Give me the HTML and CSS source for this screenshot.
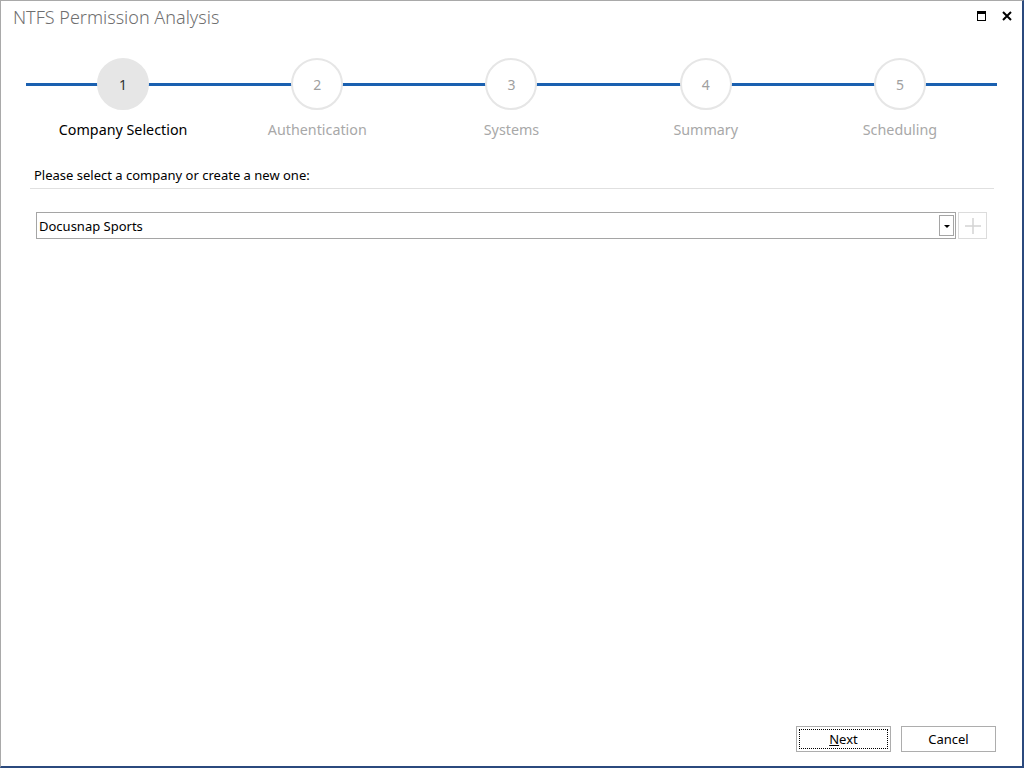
FILE: index.html
```html
<!DOCTYPE html>
<html lang="en">
<head>
    <meta charset="UTF-8">
    <title>NTFS Permission Analysis</title>
    <link rel="stylesheet" href="styles.css">
</head>
<body>
<div class="window">
    <div class="titlebar">
        <span class="title">NTFS Permission Analysis</span>
        <div class="controls">
            <span class="max-btn"></span>
            <svg class="close-btn" width="10" height="10" viewBox="0 0 10 10">
                <path d="M1 1 L9 9 M9 1 L1 9" stroke="#000" stroke-width="2"/>
            </svg>
        </div>
    </div>

    <div class="stepper">
        <div class="step-line"></div>
        <div class="step active">
            <div class="circle">1</div>
            <div class="label">Company Selection</div>
        </div>
        <div class="step">
            <div class="circle">2</div>
            <div class="label">Authentication</div>
        </div>
        <div class="step">
            <div class="circle">3</div>
            <div class="label">Systems</div>
        </div>
        <div class="step">
            <div class="circle">4</div>
            <div class="label">Summary</div>
        </div>
        <div class="step">
            <div class="circle">5</div>
            <div class="label">Scheduling</div>
        </div>
    </div>

    <div class="content">
        <p class="prompt">Please select a company or create a new one:</p>
        <div class="combo-row">
            <div class="combo">
                <span class="combo-text">Docusnap Sports</span>
                <span class="combo-arrow"></span>
            </div>
            <div class="add-btn">
                <svg width="18" height="18" viewBox="0 0 18 18">
                    <path d="M9 1 V17 M1 9 H17" stroke="#d4d4d4" stroke-width="1.5"/>
                </svg>
            </div>
        </div>
    </div>

    <div class="footer">
        <button class="btn default"><span class="focus"><u>N</u>ext</span></button>
        <button class="btn">Cancel</button>
    </div>
</div>
</body>
</html>
```

FILE: styles.css
```css
html, body { margin: 0; padding: 0; }
body { font-family: "Noto Sans", "Open Sans", sans-serif; background: #fff; }

.window {
    width: 1024px;
    height: 768px;
    box-sizing: border-box;
    border-top: 1px solid #a9a9a9;
    border-left: 1px solid #a9a9a9;
    border-right: 2px solid #2b4a7e;
    border-bottom: 2px solid #2b4a7e;
    display: flex;
    flex-direction: column;
    background: #fff;
}

.titlebar {
    height: 34px;
    display: flex;
    align-items: center;
    justify-content: space-between;
    padding: 0 10px 0 12px;
}
.title { font-size: 18px; color: #6f6f6f; font-weight: 300; margin-top: -3px; }
.controls { display: flex; align-items: center; gap: 16px; margin-top: -4px; }
.max-btn {
    width: 7px;
    height: 6px;
    border: 1px solid #000;
    border-top: 3px solid #000;
}

.stepper {
    position: relative;
    display: grid;
    grid-template-columns: repeat(5, 1fr);
    margin: 23px 25px 0 25px;
}
.step-line {
    position: absolute;
    left: 0;
    right: 0;
    top: 25px;
    height: 3px;
    background: #1a60b0;
}
.step { display: flex; flex-direction: column; align-items: center; position: relative; }
.circle {
    width: 48px;
    height: 48px;
    border-radius: 50%;
    border: 2px solid #e6e6e6;
    background: #fff;
    color: #a0a0a0;
    font-size: 14px;
    display: flex;
    align-items: center;
    justify-content: center;
}
.step.active .circle { background: #e6e6e6; color: #333; }
.label { margin-top: 10px; font-size: 14.3px; color: #a8a8a8; }
.step.active .label { color: #000; }

.content { padding: 0 28px 0 29px; flex: 1; }
.prompt {
    margin: 27px 0 0 0;
    padding: 0 0 4px 4px;
    font-size: 13px;
    color: #000;
    border-bottom: 1px solid #e0e0e0;
}
.combo-row { display: flex; gap: 2px; margin: 23px 7px 0 6px; }
.combo {
    flex: 1;
    height: 25px;
    border: 1px solid #a5a5a5;
    display: flex;
    align-items: center;
    justify-content: space-between;
    padding: 0 1px 0 2px;
}
.combo-text { font-size: 13px; color: #000; }
.combo-arrow {
    width: 13px;
    height: 19px;
    border: 1px solid #a5a5a5;
    position: relative;
}
.combo-arrow::after {
    content: "";
    position: absolute;
    left: 4px;
    top: 9px;
    border-left: 3px solid transparent;
    border-right: 3px solid transparent;
    border-top: 3px solid #000;
}
.add-btn {
    width: 27px;
    height: 25px;
    border: 1px solid #dcdcdc;
    display: flex;
    align-items: center;
    justify-content: center;
}

.footer { display: flex; justify-content: flex-end; gap: 10px; padding: 0 26px 14px 0; }
.btn {
    width: 95px;
    height: 26px;
    border: 1px solid #adadad;
    background: #fff;
    font-family: "Noto Sans", "Open Sans", sans-serif;
    font-size: 13px;
    color: #000;
    padding: 0;
}
.btn.default { padding: 2px; }
.focus {
    display: flex;
    align-items: center;
    justify-content: center;
    height: 100%;
    box-sizing: border-box;
    border: 1px dotted #000;
}
.btn u { text-decoration-color: #000; }
```
